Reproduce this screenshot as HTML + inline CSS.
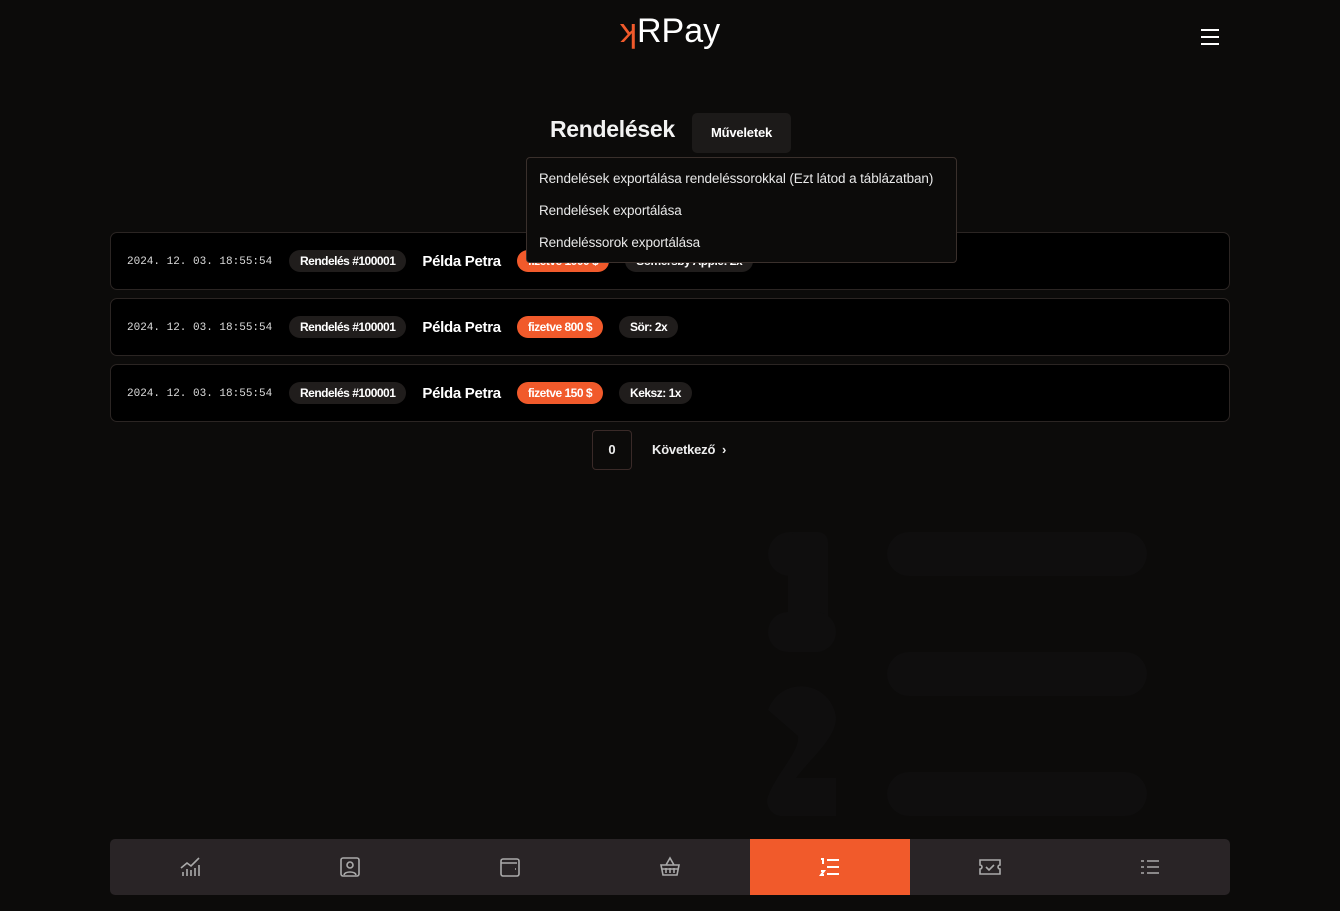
<!DOCTYPE html>
<html><head><meta charset="utf-8"><style>
*{box-sizing:border-box;margin:0;padding:0}
body{width:1340px;height:911px;background:#0c0b0a;font-family:"Liberation Sans",sans-serif;color:#eee;position:relative;overflow:hidden}
.logo{position:absolute;left:620px;top:12px;font-size:34px;color:#fff;letter-spacing:0px}
.ham{position:absolute;left:1201px;top:29px;width:18px}
.ham i{display:block;height:2px;background:#fff;margin-bottom:5px}
h1{position:absolute;left:550px;top:116px;font-size:23px;font-weight:bold;color:#f2f2f2;letter-spacing:-0.3px}
.btn{position:absolute;left:692px;top:113px;width:99px;height:40px;background:#1c1a19;border-radius:5px;font-size:13px;font-weight:bold;text-align:center;line-height:40px;color:#fff;letter-spacing:-0.2px}
.dd{position:absolute;left:526px;top:157px;width:431px;height:106px;background:#0c0b0a;border:1px solid #3a302c;border-radius:4px;z-index:2;padding-top:13px}
.dd div{font-size:13.5px;color:#e8e8e8;padding-left:12px;height:32px;letter-spacing:-0.1px}
.card{position:absolute;left:110px;width:1120px;height:58px;background:#000;border:1px solid #2b2523;border-radius:7px;display:flex;align-items:center;padding-left:16px}
.dt{font-family:"Liberation Mono",monospace;font-size:11px;color:#ddd;width:162px;margin-top:2px}
.pill{background:#201d1c;border-radius:12px;height:22px;line-height:22px;padding:0 11px;font-size:12px;font-weight:bold;color:#fff;margin-right:16px;letter-spacing:-0.5px}
.name{font-size:15px;font-weight:bold;color:#fff;margin-right:16px;letter-spacing:-0.3px}
.or{background:#f15a2b}
.pg{position:absolute;left:592px;top:430px;width:40px;height:40px;border:1px solid #3a2a28;border-radius:4px;text-align:center;line-height:38px;font-weight:bold;font-size:13px}
.next{position:absolute;left:652px;top:442px;font-size:13px;font-weight:bold;letter-spacing:-0.2px}
.nav{position:absolute;left:110px;top:839px;width:1120px;height:56px;background:#292426;border-radius:5px;display:flex}
.nav div{flex:1;display:flex;align-items:center;justify-content:center}
.nav .act{background:#f15a2b}
</style></head><body>
<div class="logo"><span style="color:#f15a2b">ʞ</span>RPay</div>
<div class="ham"><i></i><i></i><i></i></div>
<svg style="position:absolute;left:760px;top:530px" width="400" height="290"><g fill="#0f0e0e"><rect x="127" y="2" width="260" height="44" rx="22"/><rect x="127" y="122" width="260" height="44" rx="22"/><rect x="127" y="242" width="260" height="44" rx="22"/><rect x="8" y="2" width="60" height="44" rx="22"/><rect x="28" y="2" width="40" height="120" rx="10"/><rect x="8" y="82" width="68" height="40" rx="20"/><path d="M8 180a35 35 0 0 1 68 8c0 20-25 40-40 60h40v38H20a15 15 0 0 1-12-20c10-25 32-45 30-60z"/></g></svg>
<h1>Rendelések</h1>
<div class="btn">Műveletek</div>
<div class="dd"><div>Rendelések exportálása rendeléssorokkal (Ezt látod a táblázatban)</div><div>Rendelések exportálása</div><div>Rendeléssorok exportálása</div></div>
<div class="card" style="top:232px"><span class="dt">2024. 12. 03. 18:55:54</span><span class="pill">Rendelés #100001</span><span class="name">Példa Petra</span><span class="pill or">fizetve 1000 $</span><span class="pill">Somersby Apple: 2x</span></div>
<div class="card" style="top:298px"><span class="dt">2024. 12. 03. 18:55:54</span><span class="pill">Rendelés #100001</span><span class="name">Példa Petra</span><span class="pill or">fizetve 800 $</span><span class="pill">Sör: 2x</span></div>
<div class="card" style="top:364px"><span class="dt">2024. 12. 03. 18:55:54</span><span class="pill">Rendelés #100001</span><span class="name">Példa Petra</span><span class="pill or">fizetve 150 $</span><span class="pill">Keksz: 1x</span></div>
<div class="pg">0</div>
<div class="next">Következő &nbsp;›</div>
<div class="nav">
<div><svg width="22" height="22" fill="none" stroke="#aaa" stroke-width="1.6"><path d="M2 12l6-5 4 3 8-8M4 20v-4M8 20v-7M12 20v-6M16 20v-8M20 20v-11"/></svg></div>
<div><svg width="22" height="22" fill="none" stroke="#aaa" stroke-width="1.6"><rect x="2" y="2" width="18" height="18" rx="2"/><circle cx="11" cy="9" r="3"/><path d="M5 19c1-4 11-4 12 0"/></svg></div>
<div><svg width="22" height="22" fill="none" stroke="#aaa" stroke-width="1.6"><rect x="2" y="3" width="18" height="17" rx="2"/><path d="M2 7h16M16 13h1"/></svg></div>
<div><svg width="22" height="22" fill="none" stroke="#aaa" stroke-width="1.6"><path d="M2 9h18l-2 10H4zM7 9l4-7 4 7M7 12v5M11 12v5M15 12v5M3 13h16"/></svg></div>
<div class="act"><svg width="22" height="22" fill="none" stroke="#fff" stroke-width="2"><path d="M8 4h12M8 11h12M8 18h12M2 3h2v5M2 15h3l-3 4h3"/></svg></div>
<div><svg width="24" height="22" fill="none" stroke="#aaa" stroke-width="1.6"><path d="M2 4h20v5a2 2 0 0 0 0 4v5H2v-5a2 2 0 0 0 0-4z"/><path d="M8 11l3 3 5-5"/></svg></div>
<div><svg width="22" height="22" fill="none" stroke="#aaa" stroke-width="1.6"><path d="M2 5h3M2 11h3M2 17h3M8 5h12M8 11h12M8 17h12"/></svg></div>
</div>
</body></html>
